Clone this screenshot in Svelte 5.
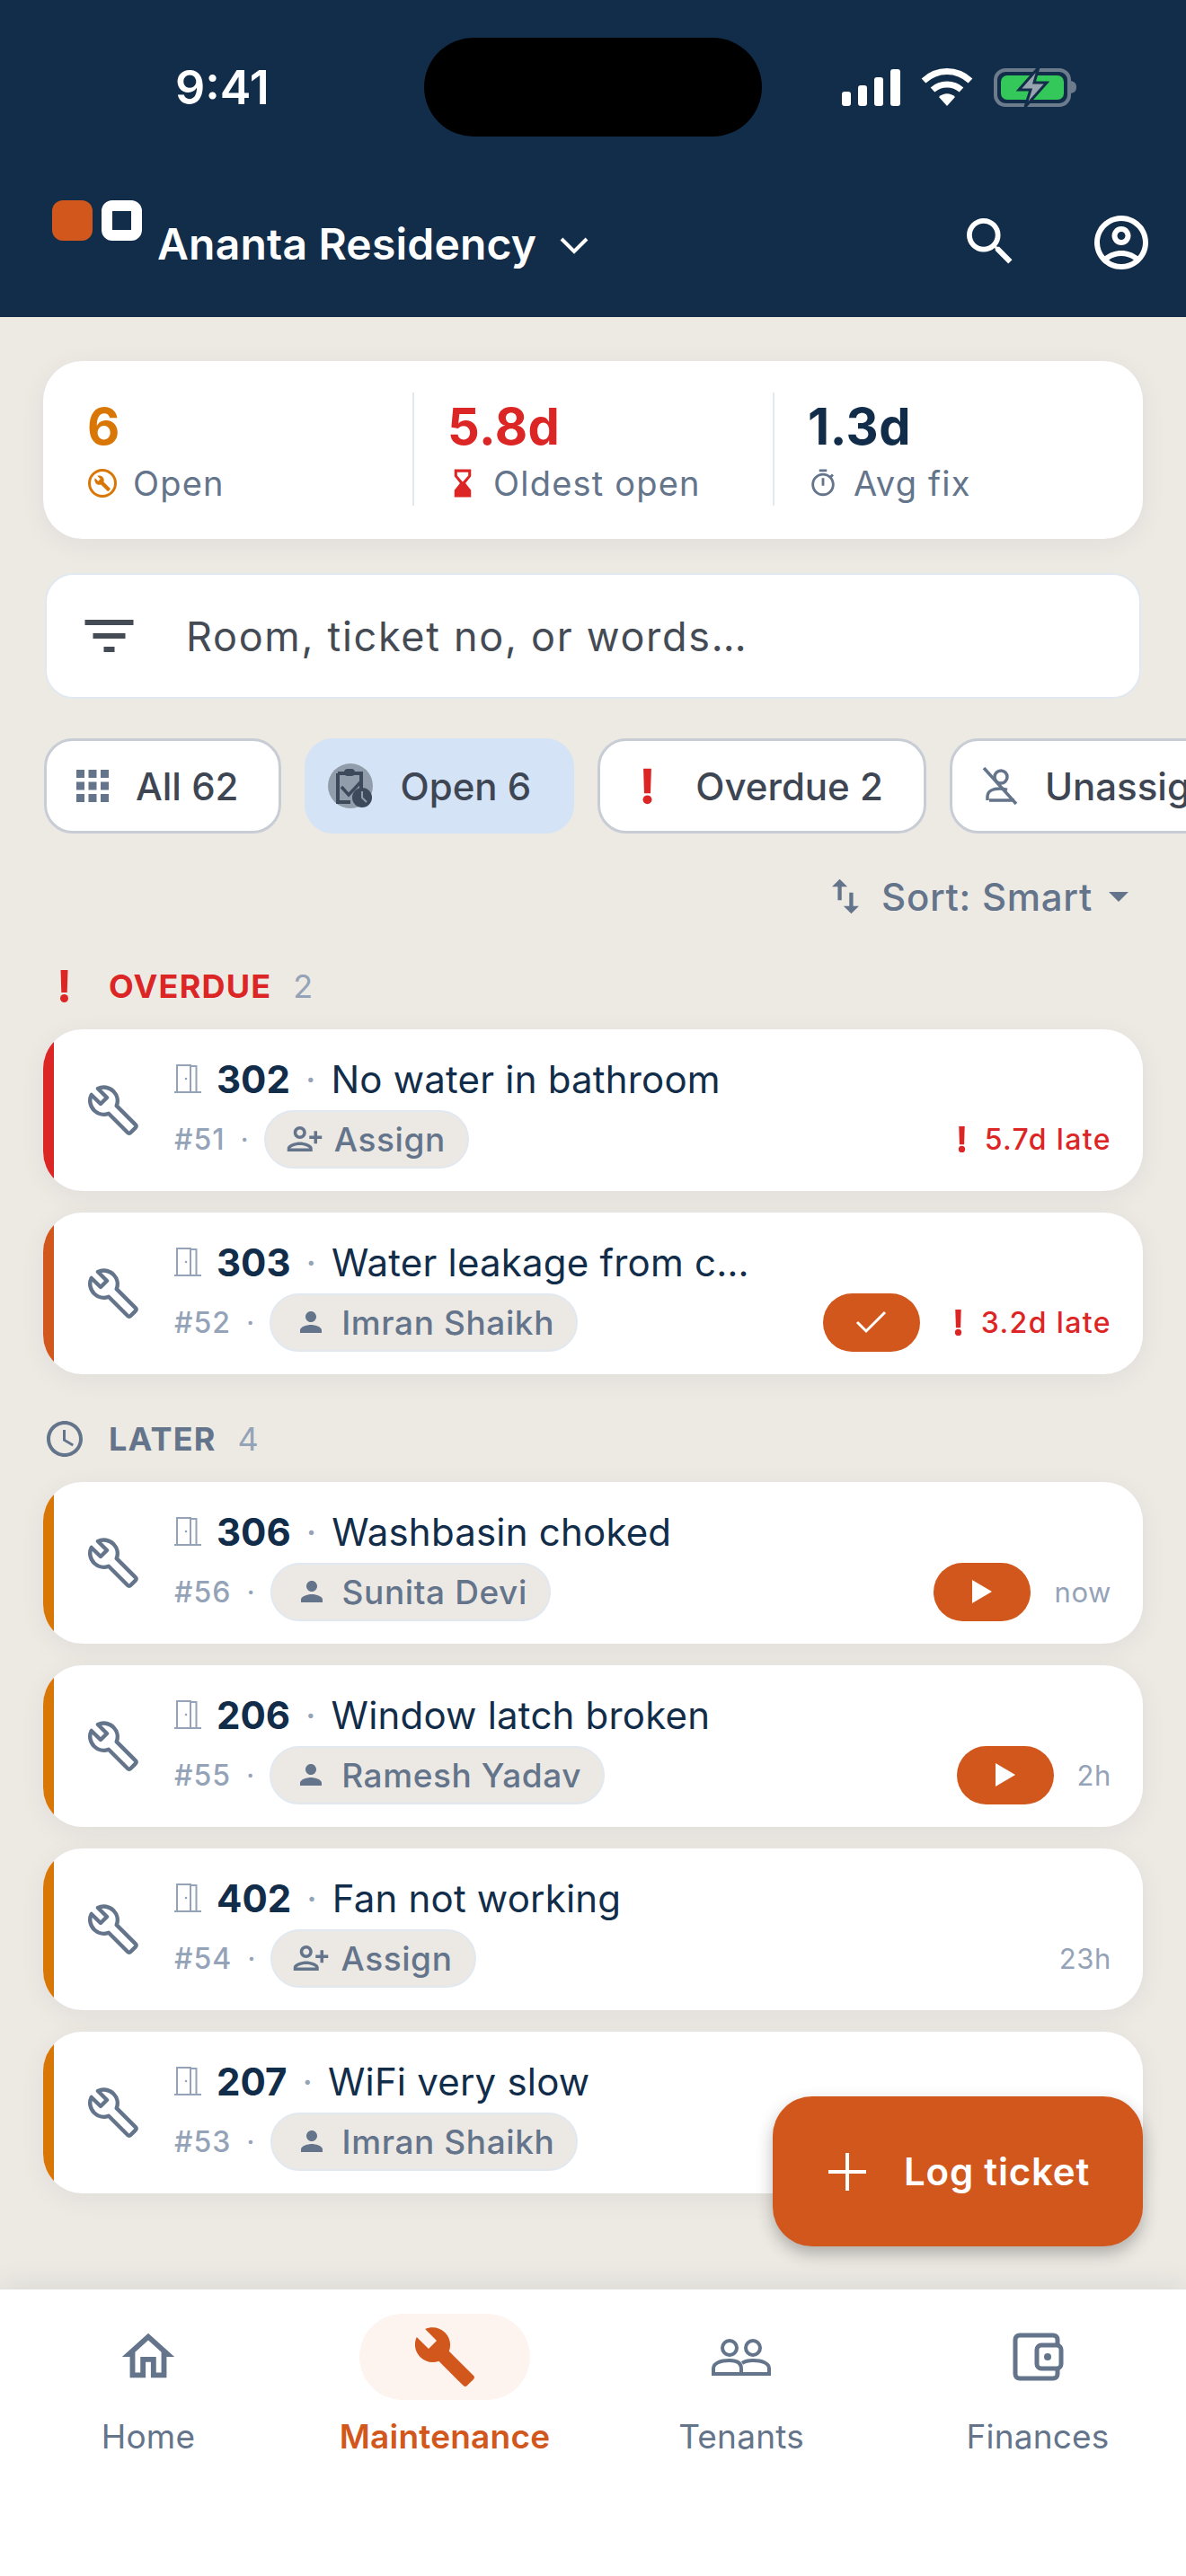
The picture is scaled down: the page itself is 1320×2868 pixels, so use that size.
<script>
  const overdue = [
    { room: '302', title: 'No water in bathroom', id: '#51', who: null, bar: 'red', late: '5.7d late' },
    { room: '303', title: 'Water leakage from c…', id: '#52', who: 'Imran Shaikh', bar: 'orange', late: '3.2d late', action: 'check' }
  ];
  const later = [
    { room: '306', title: 'Washbasin choked', id: '#56', who: 'Sunita Devi', bar: 'amber', age: 'now', action: 'play' },
    { room: '206', title: 'Window latch broken', id: '#55', who: 'Ramesh Yadav', bar: 'amber', age: '2h', action: 'play' },
    { room: '402', title: 'Fan not working', id: '#54', who: null, bar: 'amber', age: '23h' },
    { room: '207', title: 'WiFi very slow', id: '#53', who: 'Imran Shaikh', bar: 'amber', age: '' }
  ];
  const wrench = 'M22.7 19l-9.1-9.1c.9-2.3.4-5-1.5-6.9-2-2-5-2.4-7.4-1.3L9 6 6 9 1.6 4.7C.4 7.1.9 10.1 2.9 12.1c1.9 1.9 4.6 2.4 6.9 1.5l9.1 9.1c.4.4 1 .4 1.4 0l2.3-2.3c.5-.4.5-1.1.1-1.4z';
</script>

{#snippet bang(cls)}
  <svg class={cls} viewBox="0 0 10 36"><path d="M1 0h8l-.8 25H1.800z" fill="#dc2626"/><circle cx="5" cy="31.500" r="4.500" fill="#dc2626"/></svg>
{/snippet}

{#snippet ticket(t)}
  <div class="card {t.bar}">
    <svg class="wrench" viewBox="0 0 24 24"><path d={wrench} fill="none" stroke="#64748b" stroke-width="1.900" stroke-linejoin="round"/></svg>
    <div class="body">
      <div class="line">
        <svg class="door" viewBox="0 0 30 32" fill="none" stroke="#94a3b8" stroke-width="2"><path d="M0 31h30M3 31V1h15v30M18 2h6.500v29"/><circle cx="13" cy="16" r="1.300" fill="#94a3b8" stroke="none"/></svg>
        <b class="room">{t.room}</b>
        <span class="dot">·</span>
        <span class="title">{t.title}</span>
      </div>
      <div class="line meta">
        <span class="num">{t.id}</span>
        <span class="sep">·</span>
        {#if t.who}
          <span class="pill">
            <svg class="pic" viewBox="0 0 24 24"><path d="M12 12c2.210 0 4-1.790 4-4s-1.790-4-4-4-4 1.790-4 4 1.790 4 4 4zm0 2c-2.670 0-8 1.340-8 4v2h16v-2c0-2.660-5.330-4-8-4z" fill="#64748b"/></svg>
            {t.who}
          </span>
        {:else}
          <span class="pill assign">
            <svg class="pic add" viewBox="0 0 24 24"><path transform="matrix(-1 0 0 1 24 0)" d="M15 12c2.210 0 4-1.790 4-4s-1.790-4-4-4-4 1.790-4 4 1.790 4 4 4zm0-6c1.100 0 2 .9 2 2s-.9 2-2 2-2-.9-2-2 .9-2 2-2zm0 8c-2.670 0-8 1.340-8 4v2h16v-2c0-2.660-5.330-4-8-4zm-6 4c.22-.72 3.310-2 6-2 2.700 0 5.800 1.290 6 2H9zm-3-3v-3h3v-2H6V7H4v3H1v2h3v3h2z" fill="#64748b"/></svg>
            Assign
          </span>
        {/if}
        <span class="right">
          {#if t.action === 'check'}
            <span class="act"><svg viewBox="0 0 36 28" width="36" height="28"><path d="M2 14l10 10L33 3" fill="none" stroke="#fff" stroke-width="3"/></svg></span>
          {:else if t.action === 'play'}
            <span class="act"><svg viewBox="0 0 24 28" width="24" height="28"><path d="M1 1l22 13L1 27z" fill="#fff"/></svg></span>
          {/if}
          {#if t.late}
            <span class="late">{@render bang('bang-s')}{t.late}</span>
          {:else}
            <span class="age">{t.age}</span>
          {/if}
        </span>
      </div>
    </div>
  </div>
{/snippet}

<div class="phone">
  <header>
    <div class="status">
      <span class="time">9:41</span>
      <span class="island"></span>
      <span class="sys">
        <svg width="65" height="41" viewBox="0 0 65 41" fill="#fff"><rect x="0" y="25" width="10" height="16" rx="3"/><rect x="18" y="18" width="10" height="23" rx="3"/><rect x="36" y="9" width="10" height="32" rx="3"/><rect x="54" y="0" width="11" height="41" rx="3"/></svg>
        <svg width="58" height="42" viewBox="0 0 58 42" fill="none" stroke="#fff"><path d="M3 14C18 0 40 0 55 14" stroke-width="7"/><path d="M13 24c9-8 23-8 32 0" stroke-width="7"/><path d="M20 32c5-5 13-5 18 0l-9 10z" fill="#fff" stroke="none"/></svg>
        <svg width="93" height="44" viewBox="0 0 93 44"><rect x="2" y="3" width="82" height="39" rx="11" fill="none" stroke="#6c7c8c" stroke-width="4"/><rect x="8" y="9" width="70" height="27" rx="7" fill="#34c759"/><path d="M86 15c4 1 6 3 6 7s-2 6-6 7z" fill="#6c7c8c"/><path d="M50 0L28 25h13l-6 19 24-27H45z" fill="#97a3ae" stroke="#122d4a" stroke-width="3"/></svg>
      </span>
    </div>
    <div class="bar">
      <div class="logo"><i class="l1"></i><i class="l2"></i></div>
      <span class="name">Ananta Residency</span>
      <svg class="chev" viewBox="0 0 32 20" fill="none" stroke="#fff" stroke-width="4"><path d="M2 3l14 14L30 3"/></svg>
      <svg class="h-search" viewBox="3 3 18 18"><path d="M15.500 14h-.79l-.28-.27A6.471 6.471 0 0 0 16 9.500 6.500 6.500 0 1 0 9.500 16c1.610 0 3.090-.59 4.230-1.570l.27.28v.79l5 4.990L20.490 19l-4.990-5zm-6 0C7.010 14 5 11.990 5 9.500S7.010 5 9.500 5 14 7.010 14 9.500 11.990 14 9.500 14z" fill="#fff"/></svg>
      <svg class="h-user" viewBox="2 2 20 20"><path fill="#fff" d="M12 2C6.480 2 2 6.480 2 12s4.480 10 10 10 10-4.480 10-10S17.520 2 12 2zM7.350 18.500C8.660 17.560 10.260 17 12 17s3.340.56 4.650 1.500c-1.310.94-2.910 1.500-4.650 1.500s-3.340-.56-4.650-1.500zm10.790-1.380C16.450 15.800 14.320 15 12 15s-4.450.8-6.140 2.120C4.700 15.730 4 13.950 4 12c0-4.420 3.580-8 8-8s8 3.580 8 8c0 1.950-.7 3.730-1.860 5.120zM12 6c-1.930 0-3.500 1.570-3.500 3.500S10.070 13 12 13s3.500-1.570 3.500-3.500S13.930 6 12 6zm0 5c-.83 0-1.500-.67-1.500-1.500S11.170 8 12 8s1.500.67 1.500 1.500S12.830 11 12 11z"/></svg>
    </div>
  </header>

  <main>
    <section class="stats">
      <div class="stat">
        <div class="val amber-t">6</div>
        <div class="lab"><svg viewBox="0 0 34 34"><circle cx="17" cy="17" r="14.500" fill="none" stroke="#d97706" stroke-width="3"/><path transform="translate(7.500 7.500) scale(.8)" d={wrench} fill="#d97706"/></svg>Open</div>
      </div>
      <div class="stat">
        <div class="val red-t">5.8d</div>
        <div class="lab"><svg viewBox="4 1 16 22"><path d="M6 2h12v5l-4 5 4 5v5H6v-5l4-5-4-5z M8 4v2.500L12 11l4-4.500V4z" fill="#dc2626" fill-rule="evenodd"/></svg>Oldest open</div>
      </div>
      <div class="stat">
        <div class="val navy-t">1.3d</div>
        <div class="lab"><svg viewBox="0 0 24 24"><path fill="#64748b" d="M15 1H9v2h6V1zm-4 13h2V8h-2v6zm8.030-6.610l1.420-1.420c-.43-.51-.9-.99-1.410-1.410l-1.420 1.420C16.070 4.740 14.120 4 12 4c-4.970 0-9 4.030-9 9s4.020 9 9 9 9-4.030 9-9c0-2.120-.74-4.070-1.970-5.610zM12 20c-3.870 0-7-3.130-7-7s3.130-7 7-7 7 3.130 7 7-3.130 7-7 7z"/></svg>Avg fix</div>
      </div>
    </section>

    <div class="search">
      <svg viewBox="3 6 18 12"><path d="M10 18h4v-2h-4v2zM3 6v2h18V6H3zm3 7h12v-2H6v2z" fill="#454b54"/></svg>
      <span>Room, ticket no, or words…</span>
    </div>

    <div class="chips">
      <div class="chip">
        <svg class="grid-i" viewBox="0 0 36 36" fill="#64748b"><rect width="9" height="9"/><rect x="13.500" width="9" height="9"/><rect x="27" width="9" height="9"/><rect y="13.500" width="9" height="9"/><rect x="13.500" y="13.500" width="9" height="9"/><rect x="27" y="13.500" width="9" height="9"/><rect y="27" width="9" height="9"/><rect x="13.500" y="27" width="9" height="9"/><rect x="27" y="27" width="9" height="9"/></svg>
        All 62
      </div>
      <div class="chip on">
        <svg class="clip-i" viewBox="0 0 50 50"><circle cx="25" cy="25" r="25" fill="#919daa"/><path d="M11 11h26v24M11 11v32h14M10 25" fill="none" stroke="#3d4a5c" stroke-width="4"/><rect x="18" y="6" width="12" height="8" rx="4" fill="#3d4a5c"/><path d="M15 26l8 9 14-15" fill="none" stroke="#3d4a5c" stroke-width="3.500"/><circle cx="38" cy="38" r="11" fill="#3d4a5c"/><path d="M38 31v7l5 5" fill="none" stroke="#919daa" stroke-width="2"/></svg>
        Open 6
      </div>
      <div class="chip">
        {@render bang('bang-c')}
        Overdue 2
      </div>
      <div class="chip">
        <svg class="off-i" viewBox="0 0 40 42" fill="none" stroke="#64748b" stroke-width="3.500"><circle cx="21" cy="11" r="7"/><path d="M6 37v-4c0-6 6-9 14-9 3 0 5 .4 8 1.500M36 37H8"/><path d="M2 1l36 40"/></svg>
        Unassigned 4
      </div>
    </div>

    <div class="sort">
      <svg class="sw" viewBox="5 3 14 18"><path d="M16 17.010V10h-2v7.010h-3L15 21l4-3.990h-3zM9 3L5 6.990h3V14h2V6.990h3L9 3z" fill="#64748b"/></svg>
      Sort: Smart
      <svg class="dd" viewBox="7 10 10 5"><path d="M7 10l5 5 5-5z" fill="#64748b"/></svg>
    </div>

    <div class="sec red-s">
      <span class="sec-i">{@render bang('bang-h')}</span>
      <span class="sec-t">OVERDUE</span>
      <span class="sec-n">2</span>
    </div>
    <div class="list">
      {#each overdue as t}{@render ticket(t)}{/each}
    </div>

    <div class="sec">
      <span class="sec-i"><svg class="clock" viewBox="2 2 20 20"><path fill="#64748b" d="M11.990 2C6.470 2 2 6.480 2 12s4.470 10 9.990 10C17.520 22 22 17.520 22 12S17.520 2 11.990 2zM12 20c-4.420 0-8-3.580-8-8s3.580-8 8-8 8 3.580 8 8-3.580 8-8 8zM12.500 7H11v6l5.250 3.150.75-1.230-4.500-2.670z"/></svg></span>
      <span class="sec-t">LATER</span>
      <span class="sec-n">4</span>
    </div>
    <div class="list">
      {#each later as t}{@render ticket(t)}{/each}
    </div>

    <button class="fab">
      <svg viewBox="0 0 42 42" fill="none" stroke="#fff" stroke-width="4"><path d="M21 0v42M0 21h42"/></svg>
      Log ticket
    </button>
  </main>

  <nav>
    <div class="tab">
      <span class="ic"><svg class="home" viewBox="0 0 24 24"><path d="M12 5.690l5 4.500V18h-2v-6H9v6H7v-7.810l5-4.500M12 3L2 12h3v8h6v-6h2v6h6v-8h3L12 3z" fill="#64748b"/></svg></span>
      Home
    </div>
    <div class="tab active">
      <span class="ic"><svg class="spanner" viewBox="1 1 22 22"><path d={wrench} fill="#d2571c"/></svg></span>
      Maintenance
    </div>
    <div class="tab">
      <span class="ic"><svg class="people" viewBox="0 0 66 42" fill="none" stroke="#64748b" stroke-width="4"><circle cx="20" cy="11" r="8"/><circle cx="46" cy="11" r="8"/><path d="M2 40v-6c0-6 8-9 18-9s13 4 13 9v6zM33 40h31v-6c0-6-8-9-18-9-5 0-9 1-12 3"/></svg></span>
      Tenants
    </div>
    <div class="tab">
      <span class="ic"><svg class="wallet" viewBox="0 0 57 54" fill="none" stroke="#64748b" stroke-width="5"><path d="M50 14V8c0-3-2-5-5-5H8C5 3 3 5 3 8v38c0 3 2 5 5 5h37c3 0 5-2 5-5v-6"/><rect x="27" y="14" width="27" height="26" rx="5"/><circle cx="39" cy="27" r="4" fill="#64748b" stroke="none"/></svg></span>
      Finances
    </div>
  </nav>
</div>

<style>
  :global(body) {
    margin: 0;
    background: #edeae4;
  }
  .phone {
    width: 1320px;
    height: 2868px;
    display: flex;
    flex-direction: column;
    overflow: hidden;
    font-family: Inter, "Liberation Sans", sans-serif;
    background: #edeae4;
  }
  header {
    height: 353px;
    background: #122d4a;
    color: #fff;
    box-sizing: border-box;
    padding-top: 42px;
  }
  .status {
    height: 110px;
    display: flex;
    align-items: center;
  }
  .time {
    width: 472px;
    box-sizing: border-box;
    padding-left: 195px;
    font-size: 52px;
    font-weight: 600;
  }
  .island {
    width: 376px;
    height: 110px;
    border-radius: 55px;
    background: #000;
  }
  .sys {
    margin-left: 89px;
    display: flex;
    align-items: center;
    gap: 23px;
  }
  .bar {
    height: 100px;
    margin-top: 71px;
    padding: 0 42px 0 58px;
    display: flex;
    align-items: flex-start;
  }
  .logo {
    display: flex;
    gap: 10px;
  }
  .logo i {
    display: block;
    width: 45px;
    height: 45px;
    border-radius: 12px;
    box-sizing: border-box;
  }
  .l1 { background: #d2571c; }
  .l2 { border: 12px solid #fff; }
  .name {
    margin: 20px 0 0 17px;
    font-size: 48px;
    line-height: 58px;
    font-weight: 600;
    letter-spacing: 0.2px;
  }
  .chev {
    width: 32px;
    height: 20px;
    margin: 40px 0 0 26px;
  }
  .h-search {
    width: 52px;
    height: 52px;
    margin: 20px 0 0 auto;
  }
  .h-user {
    width: 60px;
    height: 60px;
    margin: 17px 0 0 90px;
  }

  main {
    flex: 1;
    position: relative;
    padding: 49px 48px 0;
    min-height: 0;
  }
  .stats {
    height: 198px;
    box-sizing: border-box;
    padding: 35px 0 37px 49px;
    background: #fff;
    border-radius: 44px;
    display: grid;
    grid-template-columns: 362px 401px 1fr;
    box-shadow: 0 6px 30px rgba(30, 40, 60, 0.06);
  }
  .stat + .stat {
    border-left: 2px solid #e2e8f0;
    padding-left: 37px;
  }
  .val {
    font-size: 56px;
    line-height: 64px;
    font-weight: 700;
    margin-top: 6px;
    letter-spacing: 0.5px;
  }
  .amber-t { color: #d97706; }
  .red-t { color: #dc2626; }
  .navy-t { color: #122d4a; }
  .lab {
    margin-top: 8px;
    display: flex;
    align-items: center;
    gap: 17px;
    font-size: 38px;
    line-height: 46px;
    color: #64748b;
    letter-spacing: 1.2px;
  }
  .lab svg {
    width: 34px;
    height: 34px;
  }
  .search {
    height: 140px;
    box-sizing: border-box;
    margin: 38px 2px 0;
    padding-left: 42px;
    background: #fff;
    border: 2px solid #e2e8f0;
    border-radius: 32px;
    display: flex;
    align-items: center;
    gap: 58px;
    font-size: 45px;
    color: #454b54;
    letter-spacing: 1.7px;
  }
  .search svg {
    width: 55px;
    height: 36px;
  }
  .chips {
    margin: 44px -48px 0 1px;
    display: flex;
    gap: 26px;
  }
  .chip {
    flex: none;
    height: 106px;
    box-sizing: border-box;
    padding: 0 45px 0 33px;
    display: flex;
    align-items: center;
    gap: 30px;
    background: #fff;
    border: 3px solid #c8ccd4;
    border-radius: 32px;
    font-size: 42px;
    font-weight: 500;
    color: #3e4654;
  }
  .chip.on {
    background: #d4e3f5;
    border-color: #d4e3f5;
    padding-left: 23px;
  }
  .grid-i { width: 36px; height: 36px; }
  .clip-i { width: 50px; height: 50px; }
  .off-i { width: 40px; height: 42px; }
  :global(.bang-c) { width: 11px; height: 41px; margin: 0 18px 0 14px; }
  :global(.bang-s) { width: 9px; height: 29px; margin-right: 21px; }
  :global(.bang-h) { width: 11px; height: 36px; display: block; }
  .sort {
    margin: 42px 16px 0 0;
    height: 56px;
    display: flex;
    justify-content: flex-end;
    align-items: center;
    font-size: 42px;
    font-weight: 500;
    letter-spacing: 0.7px;
    color: #64748b;
  }
  .sw { width: 30px; height: 46px; margin-right: 25px; }
  .dd { width: 22px; height: 11px; margin-left: 18px; }
  .sec {
    margin-top: 48px;
    height: 48px;
    display: flex;
    align-items: center;
    font-size: 36px;
    color: #64748b;
  }
  .sec-i {
    width: 73px;
    display: flex;
    padding-left: 4px;
    box-sizing: border-box;
    justify-content: flex-start;
  }
  .red-s .sec-i { padding-left: 18px; }
  .sec-t { font-weight: 700; letter-spacing: 1.2px; }
  .red-s .sec-t { color: #dc2626; }
  .sec-n { margin-left: 24px; color: #94a3b8; }
  .clock { width: 40px; height: 40px; display: block; }
  .list {
    margin-top: 24px;
    display: flex;
    flex-direction: column;
    gap: 24px;
  }
  .card {
    height: 180px;
    box-sizing: border-box;
    background: #fff;
    border-radius: 44px;
    display: flex;
    align-items: center;
    box-shadow: 0 6px 30px rgba(30, 40, 60, 0.06);
  }
  .card.red { background: linear-gradient(to right, #dc2626 12px, #fff 12px); }
  .card.orange { background: linear-gradient(to right, #d2571c 12px, #fff 12px); }
  .card.amber { background: linear-gradient(to right, #d97706 12px, #fff 12px); }
  .wrench {
    width: 56px;
    height: 56px;
    flex: none;
    margin-left: 50px;
  }
  .body {
    flex: 1;
    min-width: 0;
    margin-left: 40px;
    padding: 2px 35px 0 0;
  }
  .line {
    display: flex;
    align-items: center;
    height: 56px;
  }
  .meta {
    height: 66px;
    margin-top: 6px;
  }
  .door { width: 30px; height: 32px; margin-right: 17px; flex: none; }
  .room {
    font-size: 42px;
    font-weight: 700;
    color: #122d4a;
  }
  .dot {
    margin: 0 17px;
    font-size: 40px;
    color: #94a3b8;
  }
  .title {
    font-size: 42px;
    letter-spacing: 0.2px;
    color: #122d4a;
    white-space: nowrap;
  }
  .num {
    font-size: 32px;
    font-weight: 500;
    color: #94a3b8;
    letter-spacing: 1px;
  }
  .sep {
    margin: 0 17px;
    font-size: 32px;
    color: #94a3b8;
  }
  .pill {
    height: 65px;
    box-sizing: border-box;
    padding: 0 24px 0 26px;
    display: inline-flex;
    align-items: center;
    gap: 16px;
    background: #ece9e4;
    border: 2px solid #e2e8f0;
    border-radius: 33px;
    font-size: 37px;
    font-weight: 500;
    letter-spacing: 0.6px;
    color: #64748b;
  }
  .pic { width: 36px; height: 36px; }
  .pill.assign { padding-left: 22px; gap: 12px; }
  .pic.add { width: 42px; height: 42px; }
  .right {
    margin-left: auto;
    display: flex;
    align-items: center;
  }
  .act {
    width: 108px;
    height: 65px;
    border-radius: 33px;
    background: #d2571c;
    display: flex;
    align-items: center;
    justify-content: center;
  }
  .late {
    margin-left: 38px;
    display: flex;
    align-items: center;
    font-size: 32px;
    font-weight: 500;
    letter-spacing: 1.400px;
    color: #dc2626;
  }
  .age {
    margin-left: 26px;
    font-size: 31px;
    letter-spacing: 0.6px;
    color: #94a3b8;
  }
  .fab {
    position: absolute;
    right: 48px;
    bottom: 48px;
    width: 412px;
    height: 167px;
    border: 0;
    border-radius: 44px;
    background: #d2571c;
    color: #fff;
    font: 600 42px Inter, sans-serif;
    letter-spacing: 0.8px;
    display: flex;
    align-items: center;
    gap: 42px;
    padding: 0 0 0 62px;
    box-shadow: 0 8px 18px rgba(30, 30, 30, 0.3);
  }
  .fab svg { width: 42px; height: 42px; }
  nav {
    height: 319px;
    box-sizing: border-box;
    background: #fff;
    padding-top: 27px;
    display: grid;
    grid-template-columns: repeat(4, 1fr);
    align-items: start;
    box-shadow: 0 -6px 30px rgba(30, 40, 60, 0.08);
    position: relative;
    font-size: 37px;
    letter-spacing: 0.2px;
    color: #64748b;
    text-align: center;
  }
  .tab {
    display: flex;
    flex-direction: column;
    align-items: center;
    gap: 18px;
  }
  .ic {
    width: 190px;
    height: 96px;
    border-radius: 48px;
    display: flex;
    align-items: center;
    justify-content: center;
  }
  .active { color: #d2571c; font-weight: 600; }
  .active .ic { background: #fdf4ef; }
  .home { width: 70px; height: 70px; }
  .spanner { width: 66px; height: 66px; }
  .people { width: 66px; height: 42px; }
  .wallet { width: 57px; height: 54px; }
</style>
